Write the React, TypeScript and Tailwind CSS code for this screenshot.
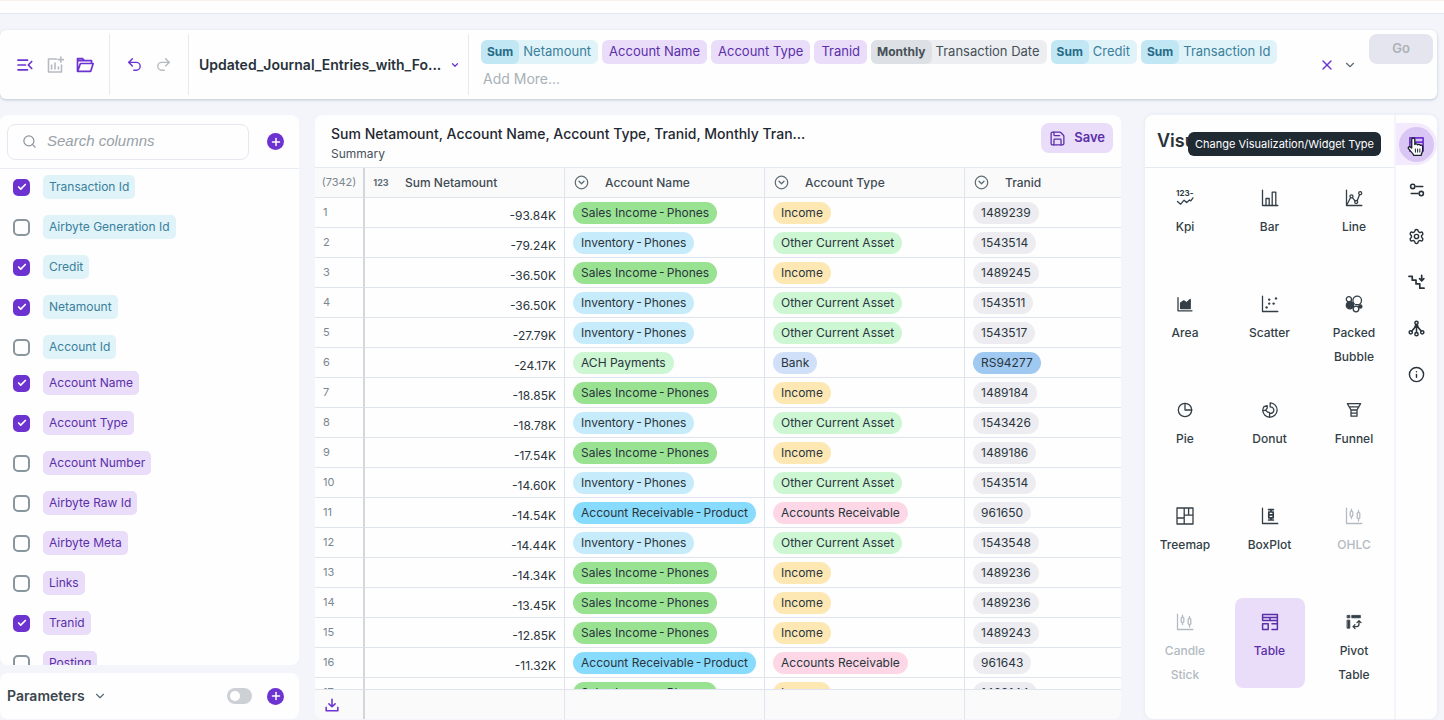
import type { ReactNode } from "react";
import { Check, ChevronDown, CircleChevronDown, Info, Plus, Redo2, Save, Search, Settings, Undo2, X } from "lucide-react";

type Tone = "measure" | "text" | "date";

const chipTone: Record<Tone, string> = {
  measure: "bg-[#e0f3f9] text-[#3a7f9b]",
  text: "bg-[#e9ddfa] text-[#5b2fa8]",
  date: "bg-[#eceef1] text-[#465158]",
};

const prefixTone: Record<Tone, string> = {
  measure: "bg-[#c0e7f3] text-[#266b88]",
  text: "bg-[#d9c6f5] text-[#4b2294]",
  date: "bg-[#dde1e5] text-[#465158]",
};

const query: { prefix?: string; label: string; tone: Tone }[] = [
  { prefix: "Sum", label: "Netamount", tone: "measure" },
  { label: "Account Name", tone: "text" },
  { label: "Account Type", tone: "text" },
  { label: "Tranid", tone: "text" },
  { prefix: "Monthly", label: "Transaction Date", tone: "date" },
  { prefix: "Sum", label: "Credit", tone: "measure" },
  { prefix: "Sum", label: "Transaction Id", tone: "measure" },
];

const columnGroups: { tone: Tone; items: [string, boolean][] }[] = [
  {
    tone: "measure",
    items: [
      ["Transaction Id", true],
      ["Airbyte Generation Id", false],
      ["Credit", true],
      ["Netamount", true],
      ["Account Id", false],
    ],
  },
  {
    tone: "text",
    items: [
      ["Account Name", true],
      ["Account Type", true],
      ["Account Number", false],
      ["Airbyte Raw Id", false],
      ["Airbyte Meta", false],
      ["Links", false],
      ["Tranid", true],
      ["Posting", false],
    ],
  },
];

// Category names join their parts with a dash set between narrow spaces.
const SALES = "Sales Income\u2009-\u2009Phones";
const INVENTORY = "Inventory\u2009-\u2009Phones";
const RECEIVABLE = "Account Receivable\u2009-\u2009Product";
const OTHER = "Other Current Asset";

const pillColor: Record<string, string> = {
  [SALES]: "bg-[#99e292]",
  [INVENTORY]: "bg-[#c6ebfa]",
  [RECEIVABLE]: "bg-[#87dbfd]",
  "ACH Payments": "bg-[#cdf6d3]",
  Income: "bg-[#fde8b3]",
  [OTHER]: "bg-[#cdf6d3]",
  Bank: "bg-[#d0e0f8]",
  "Accounts Receivable": "bg-[#fdd7e5]",
  RS94277: "bg-[#9fc9f0]",
};

const rows: [string, string, string, string][] = [
  ["-93.84K", SALES, "Income", "1489239"],
  ["-79.24K", INVENTORY, OTHER, "1543514"],
  ["-36.50K", SALES, "Income", "1489245"],
  ["-36.50K", INVENTORY, OTHER, "1543511"],
  ["-27.79K", INVENTORY, OTHER, "1543517"],
  ["-24.17K", "ACH Payments", "Bank", "RS94277"],
  ["-18.85K", SALES, "Income", "1489184"],
  ["-18.78K", INVENTORY, OTHER, "1543426"],
  ["-17.54K", SALES, "Income", "1489186"],
  ["-14.60K", INVENTORY, OTHER, "1543514"],
  ["-14.54K", RECEIVABLE, "Accounts Receivable", "961650"],
  ["-14.44K", INVENTORY, OTHER, "1543548"],
  ["-14.34K", SALES, "Income", "1489236"],
  ["-13.45K", SALES, "Income", "1489236"],
  ["-12.85K", SALES, "Income", "1489243"],
  ["-11.32K", RECEIVABLE, "Accounts Receivable", "961643"],
  ["-11.20K", SALES, "Income", "1489144"],
];

function Svg({ size = 18, children }: { size?: number; children: ReactNode }) {
  return (
    <svg width={size} height={size} viewBox="0 0 18 18" fill="none" stroke="currentColor" strokeWidth="1.3" strokeLinecap="round" strokeLinejoin="round" aria-hidden="true">
      {children}
    </svg>
  );
}

const axes = <path d="M1.5 1.2v15.3h15.3" />;

const candles = (
  <Svg>
    {axes}
    <path d="M6.5 2.2v1.6M6.5 10v1.6M13.5 3.4v1.6M13.5 12v2M5.2 5l1.3-1.2L7.8 5v3.8L6.5 10 5.2 8.8zM12.2 6.3 13.5 5l1.3 1.3v4.4L13.5 12l-1.3-1.3z" />
  </Svg>
);

const charts: { label: string; icon: ReactNode; state?: "active" | "disabled" }[] = [
  {
    label: "Kpi",
    icon: (
      <Svg>
        <text x="0" y="6.8" fontSize="8" fontWeight="700" fill="currentColor" stroke="none">123-</text>
        <path d="m1.5 12.5 3.2 2.7 3.4-4 2.5 2.3 3-2.6 1.2 1 2.2-3" />
      </Svg>
    ),
  },
  { label: "Bar", icon: <Svg>{axes}<path d="M5 16.5v-7h3.2v7M11.2 16.5V3.2h3.6v13.3" /></Svg> },
  {
    label: "Line",
    icon: (
      <Svg>
        {axes}
        <path d="m2 15.5 3.6-7M7.6 8.8l2.4 3M12.3 11.6l2.3-6" />
        <circle cx="6.5" cy="7.3" r="1.5" />
        <circle cx="11.2" cy="13" r="1.5" />
        <circle cx="15.2" cy="4.2" r="1.5" />
      </Svg>
    ),
  },
  {
    label: "Area",
    icon: (
      <Svg>
        <path d="M2 2.6v13.2h14" />
        <path fill="currentColor" d="M4.6 13.6V8l3.2-2.2 2.8 2 3.6-3.4v9.2z" />
      </Svg>
    ),
  },
  {
    label: "Scatter",
    icon: (
      <Svg>
        {axes}
        <g fill="currentColor" stroke="none">
          <circle cx="5.6" cy="12.4" r="1.2" />
          <circle cx="8.2" cy="4.6" r="1.2" />
          <circle cx="8.2" cy="8.6" r="1.2" />
          <circle cx="12.6" cy="8.6" r="1.2" />
          <circle cx="15" cy="3.4" r="1.2" />
        </g>
      </Svg>
    ),
  },
  {
    label: "Packed Bubble",
    icon: (
      <Svg>
        <circle cx="12.2" cy="5.4" r="4.3" />
        <circle cx="3.9" cy="4.2" r="2.6" />
        <circle cx="4.9" cy="10.2" r="3.6" fill="currentColor" />
        <circle cx="11" cy="14" r="2.8" />
        <circle cx="15.3" cy="11.4" r="1.6" fill="currentColor" />
      </Svg>
    ),
  },
  { label: "Pie", icon: <Svg><circle cx="9" cy="9" r="6.7" /><path d="M9 2.3V9h6.7" /></Svg> },
  {
    label: "Donut",
    icon: (
      <Svg>
        <path d="M9.2 1.8a7.2 7.2 0 1 1-.6 14.4v-4A3.2 3.2 0 1 0 9.2 6z" />
        <path d="M6.2 4.6v2.6l-1.5 2-3 .6A7 7 0 0 1 3 5.6zM4.8 9.2l1.4 1.6 2.3.8M1.8 9.8a7 7 0 0 0 6.6 6.4" />
      </Svg>
    ),
  },
  {
    label: "Funnel",
    icon: <Svg><path d="M2.4 2.6h13.2L12 9v6.2H6V9zM4.2 5.9h9.6M6 9h6M6 12.1h6" /></Svg>,
  },
  { label: "Treemap", icon: <Svg><path d="M1 1h16v16H1zM8.2 1v16M1 11h7.2M8.2 8.2H17M12.6 1v7.2" /></Svg> },
  {
    label: "BoxPlot",
    icon: (
      <Svg>
        {axes}
        <path strokeWidth="1.7" d="M7.6 2.6h4.8M7.6 13h4.8M10 2.6V5M10 10.8V13M7.8 5h4.4v5.8H7.8zM7.8 7.9h4.4" />
      </Svg>
    ),
  },
  { label: "OHLC", icon: candles, state: "disabled" },
  { label: "Candle Stick", icon: candles, state: "disabled" },
  {
    label: "Table",
    icon: <Svg><path strokeWidth="1.5" d="M1.6 7.6v-6h14.8v14.8H11M1.6 4.6h14.8M1.6 7.6h14.8M9 4.6v3M1.6 10.8h5.6v5.6H1.6zM11 10.8h5.2" /></Svg>,
    state: "active",
  },
  {
    label: "Pivot Table",
    icon: (
      <Svg>
        <g fill="currentColor" strokeWidth="0.8">
          <rect x="2.4" y="2.4" width="2.4" height="2.4" />
          <rect x="7" y="2.4" width="8.4" height="2.4" />
          <rect x="2.4" y="7.2" width="2.4" height="8" />
        </g>
        <path d="M8.4 13.6h3A2.6 2.6 0 0 0 14 11V8.2M10 11.6l-2 2 2 2M12 9.6l2-2 2 2" />
      </Svg>
    ),
  },
];

function DownloadIcon() {
  return (
    <Svg size={14}>
      <path strokeWidth="2" d="M9 1.5V11M5 7.5l4 3.7 4-3.7M1.5 12v4.5h15V12" />
    </Svg>
  );
}

function HandCursor() {
  return (
    <svg width="19" height="20" viewBox="0 0 17 18" aria-hidden="true">
      <path
        d="M4.2 10V2.300a1.400 1.400 0 0 1 2.800 0v4.500c.3-.9 2.300-.8 2.500.3.5-.8 2.200-.6 2.400.5.6-.6 2.100-.3 2.100 1.100v3.300c0 2-1.200 2.600-1.200 4.500H5.900c0-1.500-2.500-3-4.600-6-.9-1.400.8-2.700 2.900-.5z"
        fill="#fff"
        stroke="#1c2329"
        strokeWidth="1.2"
        strokeLinejoin="round"
      />
      <path d="M7.5 10.500v3.500M9.500 10.500v3.500M11.500 10.500v3.500" stroke="#1c2329" strokeWidth="0.9" />
    </svg>
  );
}

function TopBar() {
  return (
    <header className="mr-[7px] flex h-[69px] shrink-0 rounded-md bg-[#fefefe] py-1 shadow-[0_1px_3px_rgba(30,60,90,0.25)]">
      <div className="flex w-[110px] shrink-0 items-center gap-3 border-r border-[#e5e9f1] pl-4 text-[#6d33d1]">
        <button type="button" aria-label="Collapse menu">
          <Svg><path strokeWidth="1.7" d="M2 4.2h9.5M2 9h7.5M2 13.8h9.5M15.7 5.5 12.3 9l3.4 3.5" /></Svg>
        </button>
        <button type="button" aria-label="Add chart" className="text-[#b5bbc1]">
          <Svg><path strokeWidth="1.6" d="M10.5 3h-8v13h13V9M5.6 9v4M9 7v6M12.4 11v2M14.8 1v5.2M12.2 3.6h5.2" /></Svg>
        </button>
        <button type="button" aria-label="Open file">
          <Svg><path strokeWidth="1.7" d="M1.5 15.300V2.700h5.200l1.700 1.900h7.100v2.900M1.700 15.300l2.700-7.800h12.800l-2.500 7.800zM2.500 4.600h5" /></Svg>
        </button>
      </div>
      <div className="flex w-[79px] shrink-0 items-center gap-3 border-r border-[#e5e9f1] pl-4">
        <button type="button" aria-label="Undo" className="text-[#6d33d1]"><Undo2 size={17} /></button>
        <button type="button" aria-label="Redo" className="text-[#b5bbc1]"><Redo2 size={17} /></button>
      </div>
      <div className="flex w-[280px] shrink-0 items-center border-r border-[#e5e9f1] pr-2 pl-2.5">
        <select aria-label="Data source" className="min-w-0 flex-1 appearance-none bg-transparent text-sm font-semibold text-[#28323a]">
          <option>Updated_Journal_Entries_with_Fo...</option>
        </select>
        <ChevronDown size={10} strokeWidth={3} className="shrink-0 text-[#6d33d1]" />
      </div>
      <div className="flex min-w-0 flex-1 flex-col pt-1.5 pl-3">
        <ul className="flex gap-1">
          {query.map((q) => (
            <li key={q.label} className={`flex h-6 items-center rounded-md text-[13px] whitespace-nowrap ${chipTone[q.tone]}`}>
              {q.prefix && <span className={`flex h-6 items-center rounded-md px-1.5 text-xs font-bold ${prefixTone[q.tone]}`}>{q.prefix}</span>}
              <span className={q.prefix ? "pr-[7px] pl-1" : "px-[7px]"}>{q.label}</span>
            </li>
          ))}
        </ul>
        <input aria-label="Add more fields" placeholder="Add More..." className="mt-0.5 h-6 w-full bg-transparent pl-0.5 text-sm outline-none placeholder:text-[#a9b1b8]" />
      </div>
      <div className="flex shrink-0 items-center gap-2 pr-3">
        <button type="button" aria-label="Clear" className="text-[#6d33d1]"><X size={16} /></button>
        <button type="button" aria-label="Expand" className="text-[#5b6b76]"><ChevronDown size={14} /></button>
      </div>
      <button type="button" disabled className="mr-1 h-[30px] w-16 shrink-0 rounded-lg bg-[#e4e5ee] text-[13px] font-semibold text-[#abb2b8]">Go</button>
    </header>
  );
}

function AddButton({ label }: { label: string }) {
  return (
    <button type="button" aria-label={label} className="flex size-[17px] shrink-0 items-center justify-center rounded-full bg-[#6d33d1] text-white">
      <Plus size={12} strokeWidth={3} />
    </button>
  );
}

function ColumnPanel() {
  return (
    <aside className="flex w-[299px] shrink-0 flex-col gap-2">
      <section className="flex min-h-0 flex-1 flex-col overflow-hidden rounded-lg bg-[#fefefe]">
        <div className="flex h-[54px] shrink-0 items-center justify-between border-b border-[#e9ecf4] pr-[15px] pl-[7px]">
          <label className="flex h-9 w-[242px] items-center gap-2.5 rounded-lg border border-[#e5e8f1] px-3.5 text-[#8b959c]">
            <Search size={15} />
            <input
              aria-label="Search columns"
              placeholder="Search columns"
              className="min-w-0 flex-1 bg-transparent font-['Liberation_Sans',sans-serif] text-[15px] italic outline-none placeholder:text-[#98a1a8]"
            />
          </label>
          <AddButton label="Add column" />
        </div>
        {columnGroups.map((group) => (
          <ul key={group.tone} className="flex shrink-0 flex-col gap-1">
            {group.items.map(([name, checked]) => (
              <li key={name}>
                <label className="flex h-9 items-center gap-[13px] pl-[13px]">
                  <span className="grid size-[17px] place-items-center">
                    <input type="checkbox" defaultChecked={checked} className="peer col-start-1 row-start-1 size-[17px] appearance-none rounded-[5px] border-2 border-[#8a969e] checked:border-[#6d33d1] checked:bg-[#6d33d1]" />
                    <Check size={10} strokeWidth={4} className="invisible col-start-1 row-start-1 text-white peer-checked:visible" />
                  </span>
                  <span className={`flex h-6 items-center rounded-[5px] px-1.5 text-xs ${chipTone[group.tone]}`}>{name}</span>
                </label>
              </li>
            ))}
          </ul>
        ))}
      </section>
      <section className="flex h-[46px] shrink-0 items-center rounded-lg bg-[#fefefe] pr-[15px] pl-[7px]">
        <h2 className="text-sm font-semibold text-[#3b464e]">Parameters</h2>
        <ChevronDown size={14} className="ml-2 text-[#5b6b76]" />
        <input
          type="checkbox"
          role="switch"
          aria-label="Show parameters"
          className="mr-[15px] ml-auto flex h-4 w-[25px] appearance-none items-center rounded-full bg-[#cdd1d5] px-[3px] before:size-2.5 before:rounded-full before:bg-white checked:justify-end checked:bg-[#6d33d1]"
        />
        <AddButton label="Add parameter" />
      </section>
    </aside>
  );
}

function HeaderCell({ icon, label }: { icon: ReactNode; label: string }) {
  return (
    <th scope="col" className="sticky top-0 border-r border-b border-[#e0e4ef] bg-[#fafafb] p-0 last:border-r-0">
      <div className="flex h-[29px] items-center gap-4 pl-2 text-xs font-medium text-[#414c54]">
        <span className="flex w-4 justify-center text-[#5e6c75]">{icon}</span>
        {label}
      </div>
    </th>
  );
}

function Pill({ text }: { text: string }) {
  return (
    <td className="overflow-hidden border-r border-b border-[#e0e4ef] p-0 pl-2 last:border-r-0">
      <span className={`flex h-[22px] w-fit items-center rounded-full px-2 text-xs whitespace-nowrap text-[#2a353d] ${pillColor[text] ?? "bg-[#ededf1]"}`}>{text}</span>
    </td>
  );
}

function ResultTable() {
  return (
    <main className="mb-px flex min-w-0 flex-1 flex-col overflow-hidden rounded-lg bg-[#fefefe]">
      <div className="flex h-[53px] shrink-0 items-start justify-between border-b border-[#e5e9f1] pt-2 pr-2 pl-4">
        <div>
          <h1 className="text-sm leading-[22px] font-medium text-[#1e2830]">Sum Netamount, Account Name, Account Type, Tranid, Monthly Tran...</h1>
          <p className="text-xs leading-[18px] text-[#46525a]">Summary</p>
        </div>
        <button type="button" className="flex h-[30px] items-center gap-2 rounded-lg bg-[#e9ddfa] px-2 text-[13px] font-semibold text-[#5b2fa8]">
          <Save size={17} strokeWidth={1.8} />
          Save
        </button>
      </div>
      <div className="min-h-0 flex-1 overflow-hidden">
        <table className="w-full table-fixed border-separate border-spacing-0">
          <colgroup>
            <col className="w-[50px]" />
            <col className="w-[200px]" />
            <col className="w-[200px]" />
            <col className="w-[200px]" />
            <col />
          </colgroup>
          <thead>
            <tr>
              <th scope="col" className="sticky top-0 border-r-2 border-b border-r-[#d3d6da] border-b-[#e0e4ef] bg-[#fafafb] p-0 text-[11px] font-normal text-[#7b868e]">(7342)</th>
              <HeaderCell icon={<span className="text-[9px] font-bold">123</span>} label="Sum Netamount" />
              <HeaderCell icon={<CircleChevronDown size={15} />} label="Account Name" />
              <HeaderCell icon={<CircleChevronDown size={15} />} label="Account Type" />
              <HeaderCell icon={<CircleChevronDown size={15} />} label="Tranid" />
            </tr>
          </thead>
          <tbody>
            {rows.map(([amount, name, type, id], i) => (
              <tr key={i} className="h-[30px]">
                <td className="border-r-2 border-b border-r-[#d3d6da] border-b-[#e0e4ef] p-0 pl-2 text-[11px] text-[#7b868e]">{i + 1}</td>
                <td className="border-r border-b border-[#e0e4ef] p-0 pt-1.5 pr-2 text-right text-xs leading-5 text-[#2a353d]">{amount}</td>
                <Pill text={name} />
                <Pill text={type} />
                <Pill text={id} />
              </tr>
            ))}
          </tbody>
          <tfoot>
            <tr className="h-[30px]">
              <td className="sticky bottom-0 border-t border-r-2 border-t-[#e0e4ef] border-r-[#d3d6da] bg-[#fafafb] p-0 pl-2.5">
                <button type="button" aria-label="Download" className="block text-[#6d33d1]"><DownloadIcon /></button>
              </td>
              {[0, 1, 2, 3].map((i) => (
                <td key={i} className="sticky bottom-0 border-t border-r border-[#e0e4ef] bg-[#fafafb] p-0 last:border-r-0" />
              ))}
            </tr>
          </tfoot>
        </table>
      </div>
    </main>
  );
}

const chartState = {
  active: "bg-[#e9ddfa] text-[#5b2fa8]",
  disabled: "text-[#b3bac1]",
  normal: "text-[#333e46]",
};

const tools: { label: string; icon: ReactNode }[] = [
  {
    label: "Filters",
    icon: <Svg size={16}><g strokeWidth="1.8"><circle cx="4.2" cy="5" r="2.4" /><circle cx="13.8" cy="13" r="2.4" /><path d="M8 5h7.5M2.5 13H10" /></g></Svg>,
  },
  { label: "Settings", icon: <Settings size={17} /> },
  { label: "Drill down", icon: <Svg size={17}><path strokeWidth="1.8" d="M1 2.5h3.5v4h4v4h4V15H17M14.5 1.5V7M12.2 5l2.3 2.2L16.8 5" /></Svg> },
  {
    label: "Decision tree",
    icon: (
      <Svg size={17}>
        <g strokeWidth="1.6">
          <circle cx="9" cy="3" r="1.7" />
          <circle cx="2.9" cy="13" r="1.7" />
          <circle cx="9" cy="15" r="1.7" />
          <circle cx="15.1" cy="13" r="1.7" />
          <path d="M9 4.7v8.6M8.3 4.7C8 8 6.500 9.500 4 11.600M9.700 4.700C10 8 11.500 9.500 14 11.600" />
        </g>
      </Svg>
    ),
  },
  { label: "Info", icon: <Info size={17} /> },
];

function VisualPanel() {
  return (
    <aside className="relative mr-[7px] mb-px flex w-[292px] shrink-0 rounded-lg bg-[#fefefe] shadow-[0_0_4px_rgba(40,70,110,0.08)]">
      <div className="flex min-w-0 flex-1 flex-col">
        <h2 className="flex h-[53px] shrink-0 items-center border-b border-[#e5e9f1] pl-3 text-lg font-semibold text-[#28323a]">Visualization</h2>
        <div className="grid grid-cols-[70px_70px_70px] justify-between gap-y-4 px-[5px] pt-1.5">
          {charts.map((c) => (
            <button
              key={c.label}
              type="button"
              disabled={c.state === "disabled"}
              className={`flex h-[90px] flex-col items-center gap-2 rounded-lg px-2 pt-[15px] text-xs leading-6 font-medium ${chartState[c.state ?? "normal"]}`}
            >
              {c.icon}
              <span>{c.label}</span>
            </button>
          ))}
        </div>
      </div>
      <nav aria-label="Widget tools" className="flex w-[43px] shrink-0 flex-col border-l-2 border-[#f4f4fb] pt-1.5 text-[#28323a]">
        <button type="button" aria-label="Change Visualization/Widget Type" aria-describedby="tip" className="my-0.5 flex h-[42px] items-center justify-center rounded-r-full bg-[#f3ebfd]">
          <span className="relative flex size-[35px] items-center justify-center rounded-full bg-[#d9c6f4] text-[#6d33d1]">
            <Svg size={17}><path strokeWidth="1.8" d="M2 2h14v14H2zM2 6.5h14M7 6.5V16" /></Svg>
            <span className="absolute top-2.5 left-2"><HandCursor /></span>
          </span>
        </button>
        {tools.map((t) => (
          <button key={t.label} type="button" aria-label={t.label} className="flex h-[46px] items-center justify-center">
            {t.icon}
          </button>
        ))}
      </nav>
      <div id="tip" role="tooltip" className="absolute top-[17px] right-14 flex h-6 items-center rounded-md bg-[#1f2a33] px-[7px] text-[11px] whitespace-nowrap text-white">
        Change Visualization/Widget Type
      </div>
    </aside>
  );
}

export default function App() {
  return (
    <div className="flex h-screen flex-col overflow-hidden bg-[#f3f5fa] font-['Inter','Liberation_Sans',sans-serif]">
      <div className="mb-4 h-3.5 shrink-0 border-t border-b border-t-[#fdf0ea] border-b-[#e3e6f0] bg-[#fefefe]" />
      <TopBar />
      <div className="mt-4 flex min-h-0 flex-1">
        <div className="mr-4 mb-px flex"><ColumnPanel /></div>
        <ResultTable />
        <div className="ml-6 flex"><VisualPanel /></div>
      </div>
    </div>
  );
}
